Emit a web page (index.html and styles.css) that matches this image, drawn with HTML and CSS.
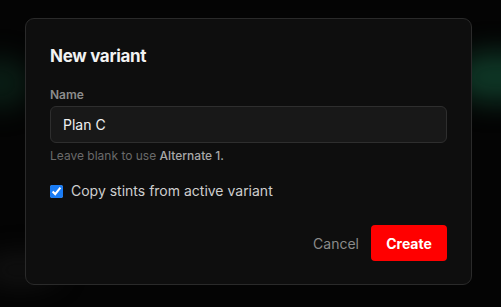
FILE: index.html
```html
<!DOCTYPE html>
<html lang="en">
<head>
	<meta charset="UTF-8">
	<title>New variant</title>
	<link rel="stylesheet" href="styles.css">
</head>
<body>
<div class="backdrop">
	<div class="glow glow-left"></div>
	<div class="glow glow-right"></div>
	<div class="glow glow-bottom"></div>
	<div class="dialog">
		<h2 class="dialog-title">New variant</h2>
		<label class="field-label" for="variant-name">Name</label>
		<input class="field-input" id="variant-name" type="text" value="Plan C">
		<p class="field-hint">Leave blank to use <strong>Alternate 1.</strong></p>
		<label class="check-row">
			<input type="checkbox" checked>
			<span>Copy stints from active variant</span>
		</label>
		<div class="actions">
			<button class="btn-cancel">Cancel</button>
			<button class="btn-create">Create</button>
		</div>
	</div>
</div>
</body>
</html>
```

FILE: styles.css
```css
*{
	margin: 0;
	padding: 0;
	box-sizing: border-box;
}
html, body{
	height: 100%;
}
body{
	background: #040404;
	font-family: Inter, "Noto Sans", sans-serif;
	overflow: hidden;
}
.backdrop{
	position: relative;
	height: 100%;
	overflow: hidden;
	padding: 18px 29px 0 25px;
}
.glow{
	position: absolute;
	border-radius: 50%;
	filter: blur(14px);
}
.glow-left{
	left: -30px;
	top: 58px;
	width: 60px;
	height: 50px;
	background: rgba(20, 80, 55, 0.35);
}
.glow-right{
	right: -40px;
	top: 52px;
	width: 90px;
	height: 50px;
	background: rgba(22, 90, 62, 0.6);
}
.glow-bottom{
	left: -20px;
	top: 255px;
	width: 80px;
	height: 30px;
	background: rgba(40, 40, 40, 0.4);
}
.dialog{
	position: relative;
	width: 447px;
	display: flex;
	flex-direction: column;
	background: #0e0e0e;
	border: 1px solid #2a2a2a;
	border-radius: 9px;
	padding: 25px 24px 23px 24px;
}
.dialog-title{
	font-size: 17px;
	line-height: 24px;
	font-weight: 700;
	color: #f2f2f2;
	letter-spacing: -0.3px;
}
.field-label{
	margin-top: 19px;
	font-size: 12px;
	line-height: 16px;
	font-weight: 600;
	color: #8c8c8c;
}
.field-input{
	margin-top: 3px;
	height: 37px;
	width: 100%;
	background: #181818;
	border: 1px solid #2e2e2e;
	border-radius: 6px;
	padding: 0 12px;
	font-family: Inter, "Noto Sans", sans-serif;
	font-size: 14px;
	color: #f0f0f0;
	outline: none;
}
.field-hint{
	margin-top: 5px;
	font-size: 12px;
	line-height: 16px;
	color: #6a6a6a;
}
.field-hint strong{
	font-weight: 500;
	color: #a8a8a8;
}
.check-row{
	margin-top: 17px;
	display: flex;
	align-items: center;
	gap: 8px;
	font-size: 14px;
	line-height: 20px;
	color: #cfcfcf;
}
.check-row input{
	width: 13px;
	height: 13px;
	margin: 0;
	accent-color: #1a7cf5;
}
.actions{
	margin-top: 24px;
	display: flex;
	justify-content: flex-end;
	align-items: center;
	gap: 12px;
}
.btn-cancel{
	background: none;
	border: none;
	font-family: Inter, "Noto Sans", sans-serif;
	font-size: 14px;
	color: #8a8a8a;
}
.btn-create{
	height: 36px;
	width: 76px;
	background: #ff0000;
	border: none;
	border-radius: 4px;
	font-family: Inter, "Noto Sans", sans-serif;
	font-size: 14px;
	font-weight: 700;
	color: #ffffff;
}
```
